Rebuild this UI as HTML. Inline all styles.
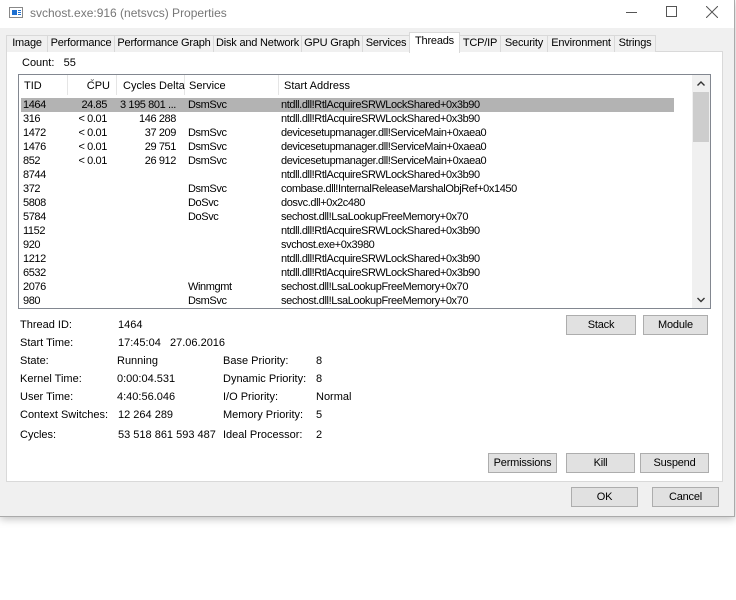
<!DOCTYPE html>
<html><head><style>
*{margin:0;padding:0;box-sizing:border-box}
body{width:736px;height:600px;background:#fff;font-family:"Liberation Sans",sans-serif;font-size:11px;color:#000;position:relative;overflow:hidden}
.a{position:absolute;white-space:nowrap}
.win{position:absolute;left:0;top:0;width:735px;height:517px;background:#f0f0f0;border-right:1px solid #aaa;border-bottom:1px solid #aaa;box-shadow:0 2px 8px rgba(0,0,0,.25)}
.title{position:absolute;left:0;top:0;width:734px;height:28px;background:#fff}
.tab{position:absolute;top:35px;height:17px;border:1px solid #d9d9d9;border-bottom:none;background:#f0f0f0;text-align:center;line-height:15px;letter-spacing:-.2px}
.panel{position:absolute;left:6px;top:51px;width:717px;height:431px;background:#fff;border:1px solid #d9d9d9}
.btn{position:absolute;background:#e1e1e1;border:1px solid #adadad;text-align:center;line-height:18px;letter-spacing:-.2px}
.r{position:absolute;left:0;width:650px;height:14px;line-height:14px;letter-spacing:-.4px}
.r span{position:absolute}
.hd{position:absolute;top:0;height:20px;line-height:22px;border-right:1px solid #e5e5e5}
</style></head><body>
<div class="win">
<div class="title">
 <div class="a" style="left:9px;top:7px;width:14px;height:11px;border:1px solid #888;background:#fff"><div style="position:absolute;left:2px;top:2px;width:5px;height:5px;background:#1e6fd0"></div><div style="position:absolute;left:8px;top:2px;width:3px;height:1px;background:#1e6fd0;box-shadow:0 2px 0 #1e6fd0,0 4px 0 #1e6fd0"></div></div>
 <div class="a" style="left:30px;top:6px;font-size:12px;color:#777">svchost.exe:916 (netsvcs) Properties</div>
 <div class="a" style="left:626px;top:12px;width:11px;height:1px;background:#555"></div>
 <div class="a" style="left:666px;top:6px;width:11px;height:11px;border:1px solid #555"></div>
 <svg class="a" style="left:706px;top:6px" width="12" height="12"><path d="M0 0L12 12M12 0L0 12" stroke="#555" stroke-width="1"/></svg>
</div>
<div class="panel"></div>
<div class="tab" style="left:6px;width:42px">Image</div>
<div class="tab" style="left:47px;width:68px">Performance</div>
<div class="tab" style="left:114px;width:100px">Performance Graph</div>
<div class="tab" style="left:213px;width:89px">Disk and Network</div>
<div class="tab" style="left:301px;width:62px">GPU Graph</div>
<div class="tab" style="left:362px;width:48px">Services</div>
<div class="tab" style="left:409px;top:32px;height:21px;width:51px;background:#fff;line-height:16px;z-index:2">Threads</div>
<div class="tab" style="left:459px;width:42px">TCP/IP</div>
<div class="tab" style="left:500px;width:48px">Security</div>
<div class="tab" style="left:547px;width:68px">Environment</div>
<div class="tab" style="left:614px;width:42px">Strings</div>

<div class="a" style="left:22px;top:57px">Count:&nbsp;&nbsp;&nbsp;55</div>

<div class="a" style="left:18px;top:74px;width:693px;height:235px;border:1px solid #828790;background:#fff;overflow:hidden">
 <div class="hd" style="left:0;width:49px;padding-left:5px">TID</div>
 <div class="hd" style="left:49px;width:49px;text-align:right;padding-right:6px">CPU</div>
 <div class="a" style="left:70px;top:-1px;font-size:8px;color:#666">&#8964;</div>
 <div class="hd" style="left:98px;width:68px;padding-left:6px">Cycles Delta</div>
 <div class="hd" style="left:166px;width:94px;padding-left:4px">Service</div>
 <div class="hd" style="left:260px;width:414px;padding-left:5px">Start Address</div>
 <div class="a" style="left:673px;top:0;width:18px;height:233px;background:#f0f0f0"></div>
 <svg class="a" style="left:678px;top:6px" width="8" height="6"><path d="M0.5 4.5L4 1L7.5 4.5" stroke="#333" fill="none" stroke-width="1.4"/></svg>
 <div class="a" style="left:674px;top:17px;width:16px;height:50px;background:#cdcdcd"></div>
 <svg class="a" style="left:678px;top:222px" width="8" height="6"><path d="M0.5 1L4 4.5L7.5 1" stroke="#333" fill="none" stroke-width="1.4"/></svg>
 <div style="position:absolute;left:0;top:23px;width:674px">
 <div class="r" style="top:0;left:2px;width:653px;background:#b3b3b3"><span style="left:2px">1464</span><span style="right:567px">24.85</span><span style="left:99px">3 195 801 ...</span><span style="left:167px">DsmSvc</span><span style="left:260px">ntdll.dll!RtlAcquireSRWLockShared+0x3b90</span></div>
 <div class="r" style="top:14px;left:2px"><span style="left:2px">316</span><span style="right:564px">&lt; 0.01</span><span style="right:495px">146 288</span><span style="left:260px">ntdll.dll!RtlAcquireSRWLockShared+0x3b90</span></div>
 <div class="r" style="top:28px;left:2px"><span style="left:2px">1472</span><span style="right:564px">&lt; 0.01</span><span style="right:495px">37 209</span><span style="left:167px">DsmSvc</span><span style="left:260px">devicesetupmanager.dll!ServiceMain+0xaea0</span></div>
 <div class="r" style="top:42px;left:2px"><span style="left:2px">1476</span><span style="right:564px">&lt; 0.01</span><span style="right:495px">29 751</span><span style="left:167px">DsmSvc</span><span style="left:260px">devicesetupmanager.dll!ServiceMain+0xaea0</span></div>
 <div class="r" style="top:56px;left:2px"><span style="left:2px">852</span><span style="right:564px">&lt; 0.01</span><span style="right:495px">26 912</span><span style="left:167px">DsmSvc</span><span style="left:260px">devicesetupmanager.dll!ServiceMain+0xaea0</span></div>
 <div class="r" style="top:70px;left:2px"><span style="left:2px">8744</span><span style="left:260px">ntdll.dll!RtlAcquireSRWLockShared+0x3b90</span></div>
 <div class="r" style="top:84px;left:2px"><span style="left:2px">372</span><span style="left:167px">DsmSvc</span><span style="left:260px">combase.dll!InternalReleaseMarshalObjRef+0x1450</span></div>
 <div class="r" style="top:98px;left:2px"><span style="left:2px">5808</span><span style="left:167px">DoSvc</span><span style="left:260px">dosvc.dll+0x2c480</span></div>
 <div class="r" style="top:112px;left:2px"><span style="left:2px">5784</span><span style="left:167px">DoSvc</span><span style="left:260px">sechost.dll!LsaLookupFreeMemory+0x70</span></div>
 <div class="r" style="top:126px;left:2px"><span style="left:2px">1152</span><span style="left:260px">ntdll.dll!RtlAcquireSRWLockShared+0x3b90</span></div>
 <div class="r" style="top:140px;left:2px"><span style="left:2px">920</span><span style="left:260px">svchost.exe+0x3980</span></div>
 <div class="r" style="top:154px;left:2px"><span style="left:2px">1212</span><span style="left:260px">ntdll.dll!RtlAcquireSRWLockShared+0x3b90</span></div>
 <div class="r" style="top:168px;left:2px"><span style="left:2px">6532</span><span style="left:260px">ntdll.dll!RtlAcquireSRWLockShared+0x3b90</span></div>
 <div class="r" style="top:182px;left:2px"><span style="left:2px">2076</span><span style="left:167px">Winmgmt</span><span style="left:260px">sechost.dll!LsaLookupFreeMemory+0x70</span></div>
 <div class="r" style="top:196px;left:2px"><span style="left:2px">980</span><span style="left:167px">DsmSvc</span><span style="left:260px">sechost.dll!LsaLookupFreeMemory+0x70</span></div>
 </div>
</div>

<div class="a" style="left:20px;top:319px">Thread ID:</div><div class="a" style="left:118px;top:319px">1464</div>
<div class="a" style="left:20px;top:337px">Start Time:</div><div class="a" style="left:118px;top:337px">17:45:04&nbsp;&nbsp;&nbsp;27.06.2016</div>
<div class="a" style="left:20px;top:355px">State:</div><div class="a" style="left:117px;top:355px">Running</div>
<div class="a" style="left:20px;top:373px">Kernel Time:</div><div class="a" style="left:117px;top:373px">0:00:04.531</div>
<div class="a" style="left:20px;top:391px">User Time:</div><div class="a" style="left:117px;top:391px">4:40:56.046</div>
<div class="a" style="left:20px;top:409px">Context Switches:</div><div class="a" style="left:118px;top:409px">12 264 289</div>
<div class="a" style="left:20px;top:429px">Cycles:</div><div class="a" style="left:118px;top:429px">53 518 861 593 487</div>
<div class="a" style="left:223px;top:355px">Base Priority:</div><div class="a" style="left:316px;top:355px">8</div>
<div class="a" style="left:223px;top:373px">Dynamic Priority:</div><div class="a" style="left:316px;top:373px">8</div>
<div class="a" style="left:223px;top:391px">I/O Priority:</div><div class="a" style="left:316px;top:391px">Normal</div>
<div class="a" style="left:223px;top:409px">Memory Priority:</div><div class="a" style="left:316px;top:409px">5</div>
<div class="a" style="left:223px;top:429px">Ideal Processor:</div><div class="a" style="left:316px;top:429px">2</div>

<div class="btn" style="left:566px;top:315px;width:70px;height:20px">Stack</div>
<div class="btn" style="left:643px;top:315px;width:65px;height:20px">Module</div>
<div class="btn" style="left:488px;top:453px;width:69px;height:20px">Permissions</div>
<div class="btn" style="left:566px;top:453px;width:69px;height:20px">Kill</div>
<div class="btn" style="left:640px;top:453px;width:69px;height:20px">Suspend</div>
<div class="btn" style="left:571px;top:487px;width:67px;height:20px">OK</div>
<div class="btn" style="left:652px;top:487px;width:67px;height:20px">Cancel</div>
</div>
</body></html>
